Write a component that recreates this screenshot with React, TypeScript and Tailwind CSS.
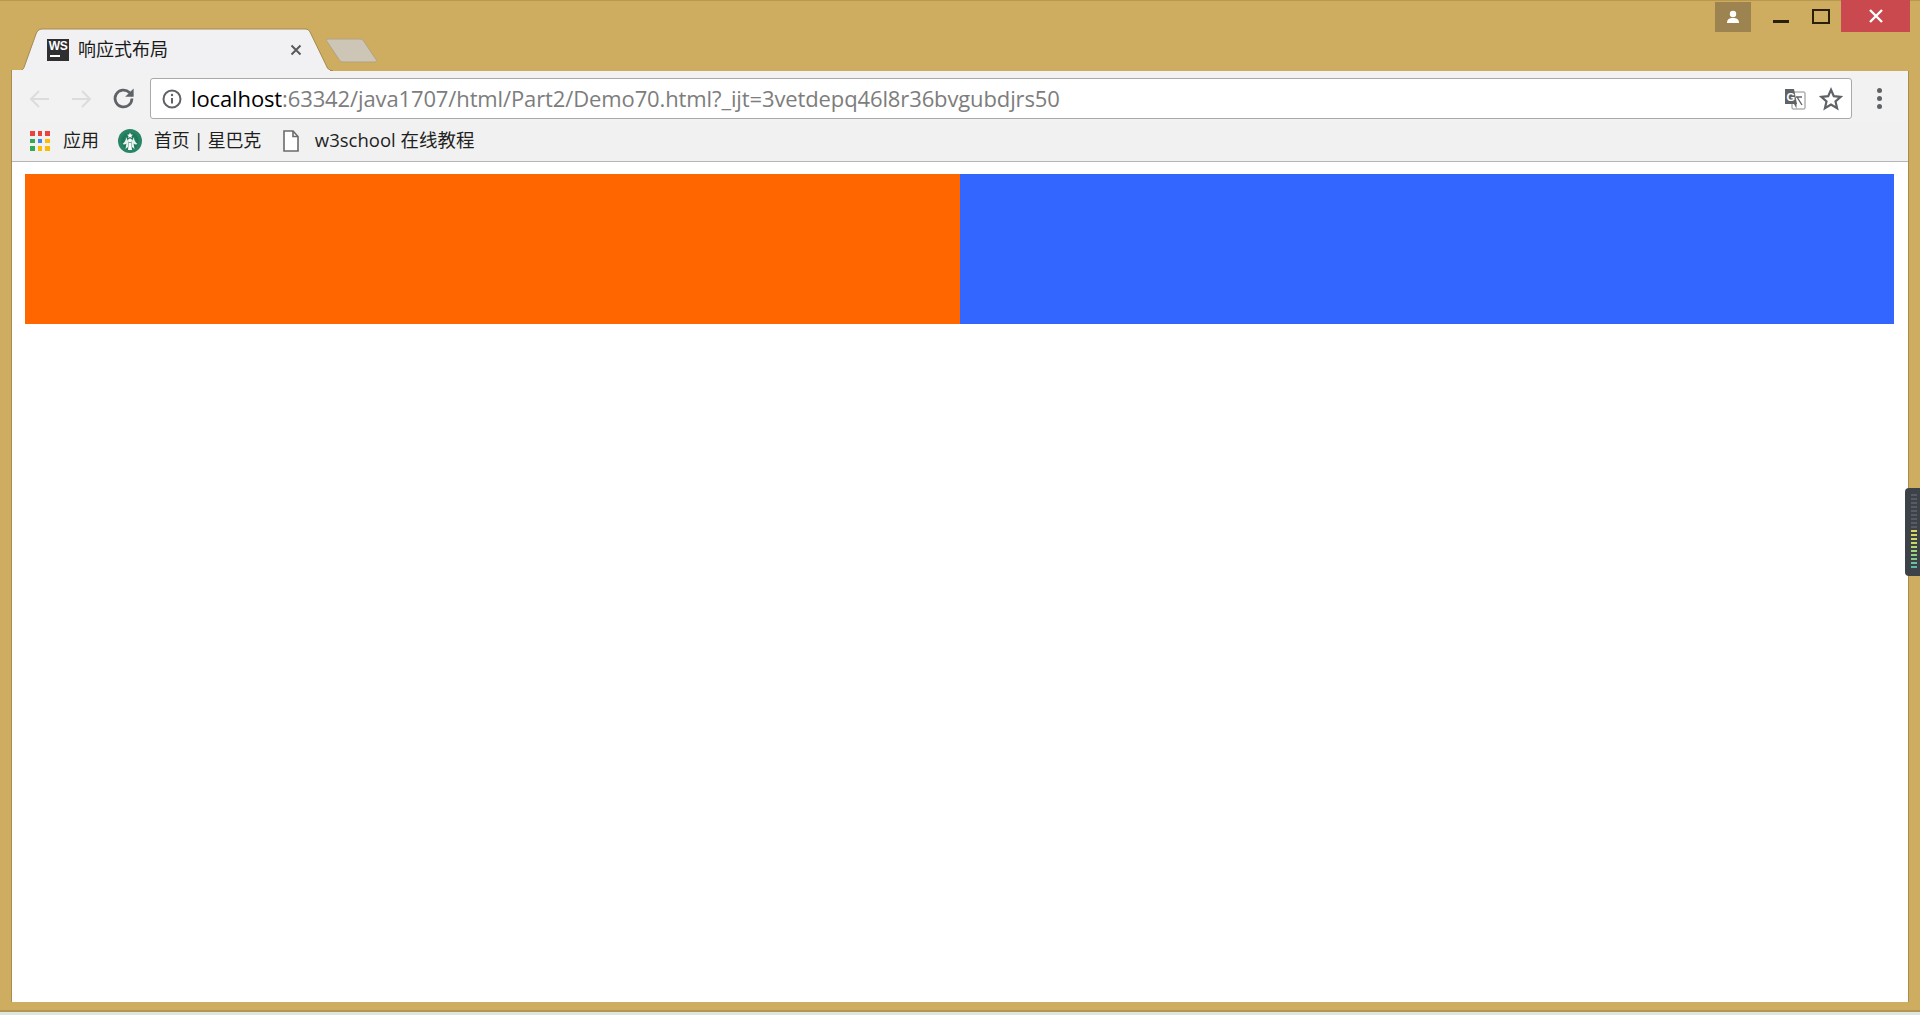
import React from 'react';

const sans = { fontFamily: '"Open Sans", "Noto Sans CJK SC", sans-serif' };

const AppsIcon = () => {
  const colors = ['#e8453c', '#e8453c', '#e8453c', '#34a853', '#4285f4', '#fbbc05', '#34a853', '#fbbc05', '#fbbc05'];
  return (
    <div className="grid grid-cols-3 gap-[3px] w-[20px] h-[20px]">
      {colors.map((c, i) => (
        <span key={i} className="w-[4.6px] h-[4.6px]" style={{ backgroundColor: c }} />
      ))}
    </div>
  );
};

const Starbucks = () => (
  <svg width="24" height="24" viewBox="0 0 24 24" className="block">
    <circle cx="12" cy="12" r="12" fill="#2a8568" />
    <circle cx="12" cy="12" r="8.800" fill="#1f7a5d" />
    <path d="M12 3.500l.9 2 2.100.2-1.600 1.300.6 2-2-1.100-2 1.100.6-2L9 5.700l2.100-.2z" fill="#fff" />
    <path d="M8 8c.2 3-1.500 5.500-3.500 7 1.500.8 3 .3 3.900-.5L7.500 20l2.500-2 .6-5zM16 8c-.2 3 1.500 5.500 3.500 7-1.500.8-3 .3-3.900-.5l.9 5.500-2.500-2-.6-5z" fill="#e8f3ee" />
    <circle cx="12" cy="11.500" r="2" fill="#fff" />
    <path d="M10.800 14h2.400l.8 7h-4z" fill="#fff" />
  </svg>
);

const TranslateIcon = () => (
  <svg width="22" height="22" viewBox="0 0 22 22" className="shrink-0">
    <rect x="8" y="4" width="13" height="17" rx="1" fill="#fff" stroke="#8a8a8a" />
    <path d="M1 1h9l3 15H1z" fill="#5f6368" />
    <text x="2.500" y="13" fontSize="11" fontWeight="700" fill="#fff" fontFamily="Liberation Sans, sans-serif">G</text>
    <path d="M13 9l5 8M18 9h-6" stroke="#5f6368" strokeWidth="1.400" fill="none" />
    <path d="M10 16l2.500 4.500v-4.500z" fill="#5f6368" />
  </svg>
);

const widgetBars = ['#565b64', '#565b64', '#565b64', '#565b64', '#565b64', '#565b64', '#565b64', '#565b64', '#565b64', '#d9d65c', '#d9d65c', '#cfd95f', '#c4da64', '#b5d86c', '#a5d474', '#95cf80', '#80c88c', '#6cc09a', '#60b8a8'];

export default function App() {
  return (
    <div className="relative flex flex-col w-[1920px] h-[1015px] overflow-hidden bg-[#cfad60]" style={sans}>
      {/* title strip */}
      <div className="relative h-[71px] shrink-0 border-t border-[#b8984f]">
        <svg width="400" height="71" className="absolute left-0 top-[-1px]">
          <path d="M11 70.500h9c2 0 3-1 4-3L36 34c1-3 3-5 6-5h263c3 0 4 1 5.500 4l16 33c1 3 3 4.500 6 4.500z" fill="#f1f1f3" stroke="#a38a52" />
          <path d="M12 70h318v2H12z" fill="#f1f1f3" />
          <path d="M328 39h32c2 0 3 1 4 2.500l12 18c1 1.500.5 2.500-1 2.500h-32c-2 0-3-1-4-2.500l-12-18c-1-1.500-.5-2.500 1-2.500z" fill="#cdc6b6" stroke="#b3a27c" />
        </svg>
        <div className="absolute left-[47px] top-[38px] w-[22px] h-[22px] bg-[#2f2f31] flex flex-col items-center">
          <span className="text-[12px] leading-[15px] font-bold text-white tracking-[-0.5px]" style={{ fontFamily: '"Liberation Sans", sans-serif' }}>WS</span>
          <span className="self-start ml-[3px] mt-[1px] w-[10px] h-[2px] bg-white" />
        </div>
        <span className="absolute left-[78px] top-[36px] text-[18px] leading-[24px] text-[#1a1a1a]">响应式布局</span>
        <svg width="12" height="12" viewBox="0 0 12 12" className="absolute left-[290px] top-[43px]">
          <path d="M1.500 1.500l9 9M10.500 1.500l-9 9" stroke="#5a5a5a" strokeWidth="2" />
        </svg>
        {/* window controls */}
        <div className="absolute left-[1715px] top-[1px] w-[36px] h-[30px] bg-[#9d8350] flex items-center justify-center">
          <svg width="14" height="14" viewBox="0 0 14 14">
            <circle cx="7" cy="4" r="3.200" fill="#fff" />
            <path d="M1 13c0-4 2.500-5 6-5s6 1 6 5z" fill="#fff" />
          </svg>
        </div>
        <div className="absolute left-[1773px] top-[19px] w-[16px] h-[3px] bg-[#2a1f08]" />
        <div className="absolute left-[1812px] top-[8px] w-[18px] h-[15px] border-2 border-[#2a1f08]" />
        <div className="absolute left-[1841px] top-[-1px] w-[69px] h-[32px] bg-[#c9494f] flex items-center justify-center">
          <svg width="14" height="14" viewBox="0 0 14 14">
            <path d="M1 1l12 12M13 1L1 13" stroke="#fff" strokeWidth="2.400" />
          </svg>
        </div>
      </div>

      {/* window body */}
      <div className="flex flex-col flex-1 ml-[11px] mr-[11px] mb-[13px] bg-white border-x border-[#a98d50]">
        {/* toolbar */}
        <div className="flex items-center h-[50px] pt-[5px] bg-[#f2f2f3] shrink-0 pl-[16px] pr-[26px]">
          <svg width="24" height="24" viewBox="0 0 24 24" fill="none" stroke="#dcdcdc" strokeWidth="2">
            <path d="M21 12H3M11 4l-8 8 8 8" />
          </svg>
          <svg width="24" height="24" viewBox="0 0 24 24" fill="none" stroke="#dcdcdc" strokeWidth="2" className="ml-[17px]">
            <path d="M3 12h18M13 4l8 8-8 8" />
          </svg>
          <svg width="27" height="27" viewBox="0 0 24 24" fill="none" stroke="#5f6368" strokeWidth="2.400" className="ml-[17px]">
            <path d="M19.500 12a7.500 7.500 0 1 1-2.200-5.300L20 9.500" />
            <path d="M21 3v7.500h-7.500z" fill="#5f6368" stroke="none" />
          </svg>
          <div className="flex items-center flex-1 h-[41px] ml-[13px] bg-white border border-[#a9a9a9] rounded-[3px] pl-[11px] pr-[8px]">
            <svg width="20" height="20" viewBox="0 0 20 20" fill="none" className="shrink-0">
              <circle cx="10" cy="10" r="8.500" stroke="#5f6368" strokeWidth="2" />
              <path d="M10 9v5.500" stroke="#5f6368" strokeWidth="2" />
              <circle cx="10" cy="6" r="1.200" fill="#5f6368" />
            </svg>
            <span className="ml-[9px] mb-[2px] text-[22px] leading-[28px] tracking-[-0.12px] text-[#7d7d7d] whitespace-nowrap">
              <span className="text-black">localhost</span>:63342/java1707/html/Part2/Demo70.html?_ijt=3vetdepq46l8r36bvgubdjrs50
            </span>
            <div className="flex-1" />
            <TranslateIcon />
            <svg width="24" height="24" viewBox="0 0 24 24" fill="none" stroke="#5f6368" strokeWidth="2.200" className="ml-[13px]">
              <path d="M12 2.800l2.800 6.400 6.900.6-5.200 4.600 1.600 6.800-6.100-3.600-6.100 3.600 1.600-6.800-5.200-4.600 6.900-.6z" />
            </svg>
          </div>
          <div className="flex flex-col gap-[3px] ml-[25px]">
            <span className="w-[5px] h-[5px] rounded-full bg-[#5f6368]" />
            <span className="w-[5px] h-[5px] rounded-full bg-[#5f6368]" />
            <span className="w-[5px] h-[5px] rounded-full bg-[#5f6368]" />
          </div>
        </div>

        {/* bookmarks */}
        <div className="flex items-center h-[41px] bg-[#f1f1f1] border-b border-[#b5b5b5] shrink-0 pl-[18px] text-[18px] leading-[24px] text-[#1f1f1f]">
          <AppsIcon />
          <span className="ml-[13px] mb-[2px]">应用</span>
          <span className="ml-[19px]"><Starbucks /></span>
          <span className="ml-[12px] mb-[2px] tracking-[-0.3px]">首页 | 星巴克</span>
          <svg width="18" height="22" viewBox="0 0 18 22" fill="#fff" stroke="#6b6b6b" strokeWidth="1.600" className="ml-[21px]">
            <path d="M2 1h9l5 5.500V21H2z" />
            <path d="M11 1v5.500h5" fill="none" />
          </svg>
          <span className="ml-[15px] mb-[2px] text-[18.5px]">w3school 在线教程</span>
        </div>

        {/* page */}
        <div className="flex flex-1 pt-[12px] pl-[13px] pr-[14px]">
          <div className="flex w-full h-[150px]">
            <div className="w-[935px] bg-[#ff6600]" />
            <div className="flex-1 bg-[#3366ff]" />
          </div>
        </div>
      </div>

      {/* bottom edge */}
      <div className="absolute left-0 right-0 bottom-0 h-[3px] bg-[#dfe6df]" />
      <div className="absolute left-0 right-0 bottom-[3px] h-[2px] bg-[#b49650]" />

      {/* docked side widget */}
      <div className="absolute right-0 top-[488px] w-[15px] h-[88px] bg-[#3d4148] rounded-l-[4px] flex flex-col items-end justify-end gap-[1.500px] pr-[3px] pb-[8px]">
        {widgetBars.map((c, i) => (
          <span key={i} className="w-[6px] h-[2.500px]" style={{ backgroundColor: c }} />
        ))}
      </div>
    </div>
  );
}
